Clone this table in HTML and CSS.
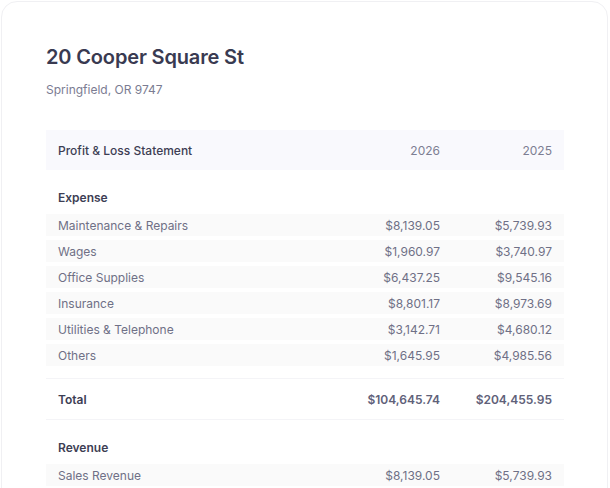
FILE: index.html
```html
<!DOCTYPE html>
<html lang="en">
<head>
<meta charset="utf-8">
<title>Profit &amp; Loss</title>
<link rel="stylesheet" href="styles.css">
</head>
<body>
<div class="card">
  <h1 class="title">20 Cooper Square St</h1>
  <p class="subtitle">Springfield, OR 9747</p>
  <div class="table">
    <div class="row head">
      <span>Profit &amp; Loss Statement</span>
      <span class="num">2026</span>
      <span class="num">2025</span>
    </div>
    <div class="section">Expense</div>
    <div class="rows">
      <div class="row item"><span>Maintenance &amp; Repairs</span><span class="num">$8,139.05</span><span class="num">$5,739.93</span></div>
      <div class="row item"><span>Wages</span><span class="num">$1,960.97</span><span class="num">$3,740.97</span></div>
      <div class="row item"><span>Office Supplies</span><span class="num">$6,437.25</span><span class="num">$9,545.16</span></div>
      <div class="row item"><span>Insurance</span><span class="num">$8,801.17</span><span class="num">$8,973.69</span></div>
      <div class="row item"><span>Utilities &amp; Telephone</span><span class="num">$3,142.71</span><span class="num">$4,680.12</span></div>
      <div class="row item"><span>Others</span><span class="num">$1,645.95</span><span class="num">$4,985.56</span></div>
    </div>
    <div class="row total"><span>Total</span><span class="num">$104,645.74</span><span class="num">$204,455.95</span></div>
    <div class="section">Revenue</div>
    <div class="rows">
      <div class="row item"><span>Sales Revenue</span><span class="num">$8,139.05</span><span class="num">$5,739.93</span></div>
    </div>
  </div>
</div>
</body>
</html>
```
FILE: styles.css
```css
html, body {
  margin: 0;
  padding: 0;
  background: #ffffff;
  overflow: hidden;
}
body {
  font-family: Inter, "Noto Sans", sans-serif;
  height: 488px;
}
.card {
  margin: 1px 0 0 1px;
  width: 607px;
  box-sizing: border-box;
  height: 600px;
  border: 1px solid #f0f0f3;
  border-radius: 16px;
  padding: 41px 44px 0 44px;
  background: #fff;
}
.title {
  margin: 0;
  font-size: 20px;
  line-height: 28px;
  font-weight: 600;
  color: #393a51;
  letter-spacing: -0.15px;
}
.subtitle {
  margin: 9px 0 0 0;
  font-size: 12px;
  line-height: 20px;
  color: #7b7c92;
}
.table {
  margin-top: 30px;
  width: 518px;
}
.row {
  display: grid;
  grid-template-columns: 1fr 112px 112px;
  align-items: center;
  padding: 0 12px;
  font-size: 12px;
}
.num {
  text-align: right;
}
.head {
  height: 40px;
  background: #f9f9fd;
  color: #3d3e54;
  font-weight: 500;
}
.head .num {
  color: #7d7e93;
  font-weight: 400;
}
.section {
  padding: 18px 12px 6px 12px;
  font-size: 12px;
  line-height: 20px;
  font-weight: 600;
  color: #3d3e54;
}
.rows {
  display: flex;
  flex-direction: column;
  gap: 4px;
}
.item {
  height: 22px;
  background: #fafafa;
  color: #6f7086;
}
.total {
  margin-top: 12px;
  height: 42px;
  box-sizing: border-box;
  border-top: 1px solid #f4f4f7;
  border-bottom: 1px solid #f4f4f7;
  font-weight: 600;
  color: #3d3e54;
}
.total .num {
  color: #606179;
}
```
